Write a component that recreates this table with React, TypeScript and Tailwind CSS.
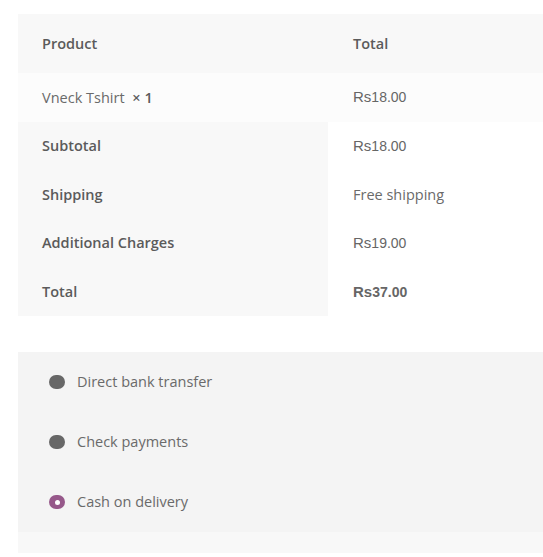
const rows = [
  { label: 'Subtotal', amount: '18.00' },
  { label: 'Shipping', text: 'Free shipping' },
  { label: 'Additional Charges', amount: '19.00' },
  { label: 'Total', amount: '37.00', strong: true },
];

const methods = [
  { name: 'Direct bank transfer', checked: false },
  { name: 'Check payments', checked: false },
  { name: 'Cash on delivery', checked: true },
];

function Price({ value, strong }: { value: string; strong?: boolean }) {
  return (
    <span className={`font-['Liberation_Sans',sans-serif] text-[14px] text-[#666] ${strong ? 'font-bold text-[#555]' : ''}`}>
      <span className="text-[15px]">Rs</span>
      {value}
    </span>
  );
}

function Radio({ checked }: { checked: boolean }) {
  if (checked) {
    return (
      <span className="flex h-[14px] w-[16px] items-center justify-center rounded-full bg-[#96588a]">
        <span className="h-[5px] w-[5px] rounded-full bg-white" />
      </span>
    );
  }
  return <span className="h-[14px] w-[16px] rounded-full bg-[#676767]" />;
}

export default function App() {
  return (
    <div className="min-h-screen bg-white pl-[18px] pt-[14px] font-['Open_Sans',sans-serif] text-[14.5px]">
      {/* order table */}
      <div className="grid grid-cols-[310px_1fr]">
        <div className="col-span-2 grid h-[59px] grid-cols-subgrid items-center bg-[#f8f8f8] font-semibold text-[#5b5b5b]">
          <div className="pl-[24px]">Product</div>
          <div className="pl-[25px]">Total</div>
        </div>
        <div className="col-span-2 grid h-[49px] grid-cols-subgrid items-center bg-[#fcfcfc] text-[#6a6a6a]">
          <div className="pl-[24px]">
            Vneck Tshirt <span className="ml-1 font-semibold text-[#5b5b5b]">× 1</span>
          </div>
          <div className="pl-[25px]">
            <Price value="18.00" />
          </div>
        </div>
        {rows.map((r) => (
          <div key={r.label} className="col-span-2 grid h-[48.5px] grid-cols-subgrid items-center">
            <div className="flex h-full items-center bg-[#f8f8f8] pl-[24px] font-semibold text-[#5b5b5b]">{r.label}</div>
            <div className="pl-[25px] text-[#6a6a6a]">
              {r.amount ? <Price value={r.amount} strong={r.strong} /> : r.text}
            </div>
          </div>
        ))}
      </div>

      {/* payment methods */}
      <div className="mt-[36px]">
        <ul className="bg-[#f4f4f4]">
          {methods.map((m) => (
            <li key={m.name} className="flex h-[60px] items-center gap-[12px] pl-[31px] text-[#6a6a6a]">
              <Radio checked={m.checked} />
              <span>{m.name}</span>
            </li>
          ))}
        </ul>
        <div className="h-[21px] bg-[#f8f8f8]" />
      </div>
    </div>
  );
}
